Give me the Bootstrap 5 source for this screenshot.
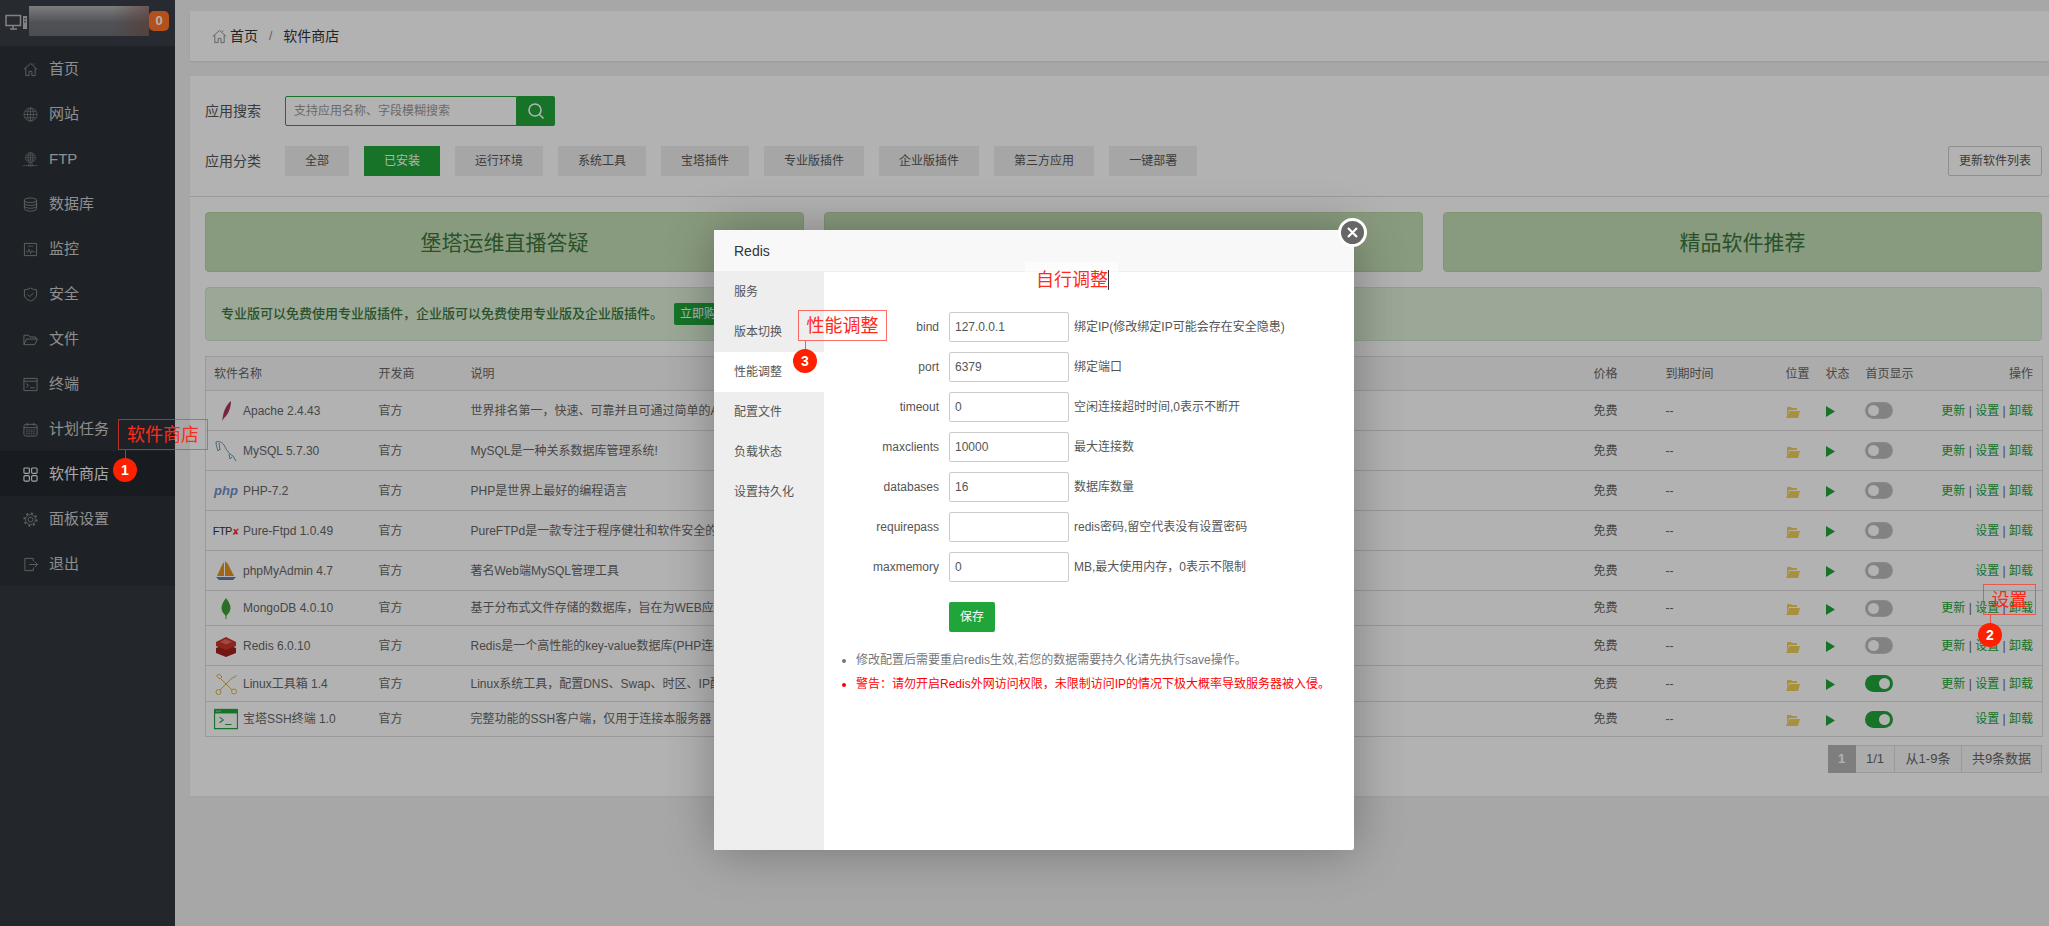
<!DOCTYPE html>
<html lang="zh-CN">
<head>
    <meta charset="UTF-8">
    <meta name="viewport" content="width=device-width, initial-scale=1.0">
    <title>软件商店</title>
    <link rel="stylesheet" href="https://cdn.jsdelivr.net/npm/bootstrap@5.3.0/dist/css/bootstrap.min.css">
    <style>
        html, body { height: 926px; overflow: hidden; }
        body {
            position: relative;
            font-family: "Liberation Sans", "Noto Sans CJK SC", sans-serif;
            font-size: 12px;
            color: #666;
            background: #f0f0f0;
        }
        a { text-decoration: none; }

        /* sidebar */
        #sideBar { width: 175px; height: 926px; background: #33373e; flex-shrink: 0; }
        .side-head { height: 46px; background: #383d46; padding: 6px 0 0 5px; }
        .side-logo {
            width: 120px; height: 30px; margin-left: 2px;
            background: linear-gradient(90deg, transparent 70%, rgba(130, 80, 70, .55)), linear-gradient(180deg, #b4b4b4, #72757a 55%, #6c6f74);
        }
        .side-count {
            width: 20px; height: 20px; margin-top: 5px; border-radius: 5px;
            background: #ff7529; color: #fff; font-weight: 700; font-size: 13px; line-height: 20px; text-align: center;
        }
        .side-list { background: #2c3138; }
        .side-link {
            height: 45px; padding: 2px 0 0 23px; gap: 11px;
            font-size: 15px; color: #ccc;
        }
        .side-link svg { width: 15px; height: 15px; color: #8c8c8c; flex-shrink: 0; }
        .side-link.is-on { background: #23272d; color: #f2f2f2; }
        .side-link.is-on svg { color: #eee; }

        /* main */
        #mainBox { flex: 1; padding: 11px 0 0 15px; min-width: 0; }
        .crumb-panel { height: 50px; background: #fff; padding: 0 0 0 22px; font-size: 14px; color: #333; box-shadow: 0 1px 2px rgba(0, 0, 0, .08); }
        .crumb-panel svg { width: 15px; height: 15px; color: #888; margin-right: 3px; }
        .crumb-text { padding-top: 0; line-height: 50px; }
        .crumb-sep { color: #888; margin: 0 11px; font-size: 12px; }
        .store-panel { height: 720px; margin-top: 15px; background: #fff; box-shadow: 0 1px 2px rgba(0, 0, 0, .05); }
        .store-top { padding: 20px 7px 20px 15px; border-bottom: 1px solid #ddd; }
        .field-name { width: 80px; font-size: 14px; color: #555; flex-shrink: 0; padding-top: 1px; }
        .search-input {
            width: 232px; height: 30px; border: 1px solid #20a53a; border-radius: 2px 0 0 2px;
            padding: 0 8px; font-size: 12px; color: #666; outline: 0;
        }
        .search-input::placeholder { color: #999; }
        .search-go { width: 38px; height: 30px; background: #20a53a; border-radius: 0 2px 2px 0; }
        .search-go svg { width: 18px; height: 18px; color: #fff; }
        .type-row { gap: 15px; }
        .type-btn { height: 30px; padding: 0 20px; line-height: 31px; background: #eee; color: #555; font-size: 12px; }
        .type-btn.is-on { background: #20a53a; color: #fff; }
        .refresh-btn { height: 30px; padding: 0 10px; border: 1px solid #ccc; border-radius: 2px; background: #fff; color: #555; font-size: 12px; line-height: 28px; }

        .store-body { padding: 15px 7px 0 15px; }
        .banner-row { gap: 20px; }
        .big-banner {
            flex: 1; height: 60px; line-height: 59px; text-align: center;
            background: #c5dfb5; border: 1px solid #b8d6a4; border-radius: 4px;
            color: #3c763d; font-size: 21px;
        }
        .pro-tip {
            height: 54px; margin-top: 15px; padding-left: 15px;
            background: #dff0d8; border: 1px solid #d0e6c6; border-radius: 4px;
            color: #3c763d; font-size: 13px; font-weight: 500; overflow: hidden;
        }
        .pro-buy { height: 22px; line-height: 22px; padding: 0 6px; margin-left: 11px; background: #20a53a; color: #fff; border-radius: 2px; font-size: 12px; font-weight: 400; }

        .soft-table { table-layout: fixed; width: 1837px; margin: 15px 0 0; border: 1px solid #ddd; --bs-table-bg: transparent; }
        .soft-table th, .soft-table td {
            padding: 0 9px; vertical-align: middle; font-size: 12px; font-weight: 400;
            color: #666; border: 0; border-bottom: 1px solid #ddd; white-space: nowrap; overflow: hidden;
            height: 40px;
        }
        .soft-table th { height: 34px; background: #f6f6f6; }
        .soft-table .h35 td { height: 35px; }
        .soft-table .h36 td { height: 36px; }
        .soft-table .h36b td { height: 35px; }
        .soft-table th:first-child, .soft-table td:first-child { padding-left: 8px; }
        .c-name { width: 164px; } .c-dev { width: 92px; } .c-desc { width: 1123px; }
        .c-price { width: 72px; } .c-end { width: 120px; } .c-pos { width: 40px; }
        .c-run { width: 40px; } .c-home { width: 68px; } .c-act { width: 118px; }
        .soft-name { gap: 5px; }
        .soft-pic { width: 24px; height: 24px; flex-shrink: 0; display: flex; align-items: center; justify-content: center; }
        .soft-pic svg { width: 24px; height: 24px; }
        .php-mark { font: italic 700 13px "Liberation Sans", sans-serif; color: #6f8fc8; }
        .ftp-mark { font: 400 11px "Liberation Sans", sans-serif; color: #333; letter-spacing: -.6px; white-space: nowrap; }
        .ftp-mark i { color: #e33; font-style: normal; font-size: 9px; }
        .act-link { color: #20a53a; }
        .folder-ico { width: 14px; height: 12px; color: #f0ce5a; display: block; margin-top: 2px; }
        .play-ico { width: 9px; height: 11px; color: #20a53a; display: block; margin-top: 2px; }
        .home-sw { display: block; width: 26px; height: 15px; border-radius: 8px; background: #bbb; box-shadow: 0 0 0 1px #c6c6c6; position: relative; }
        .home-sw::after { content: ""; position: absolute; left: 2px; top: 2px; width: 11px; height: 11px; border-radius: 50%; background: #fff; }
        .home-sw.is-on { background: #20a53a; box-shadow: 0 0 0 1px #20a53a; }
        .home-sw.is-on::after { left: 13px; }
        .page-box { margin-top: 8px; justify-content: flex-end; font-size: 13px; color: #666; }
        .page-cell { height: 28px; line-height: 26px; border: 1px solid #ddd; border-left: 0; background: #f6f6f6; text-align: center; }
        .page-cell.is-on { background: #b5b5b5; color: #fff; border-color: #b5b5b5; font-weight: 700; }
        .cell-w28 { width: 28px; } .cell-w39 { width: 39px; } .cell-w67 { width: 67px; } .cell-w80 { width: 80px; }

        /* popup layer */
        #shade { position: absolute; inset: 0; background: rgba(0, 0, 0, .3); }
        #redisBox {
            position: absolute; left: 714px; top: 230px; width: 640px; height: 620px;
            background: #fff; box-shadow: 1px 1px 50px rgba(0, 0, 0, .3); border-radius: 2px;
            color: #555;
        }
        .box-title { height: 42px; padding-left: 20px; line-height: 43px; background: #f8f8f8; border-bottom: 1px solid #eee; font-size: 14px; color: #333; }
        .box-menu { width: 110px; height: 578px; background: #eee; flex-shrink: 0; }
        .box-menu div { height: 40px; line-height: 41px; padding-left: 20px; font-size: 12px; color: #555; }
        .box-menu div.is-on { background: #fff; }
        .box-main { padding: 40px 0 0 15px; flex: 1; }
        .conf-line { height: 30px; margin-bottom: 10px; }
        .conf-line label { width: 100px; text-align: right; margin-right: 10px; font-size: 12px; color: #555; flex-shrink: 0; }
        .conf-line input { width: 120px; height: 30px; border: 1px solid #ccc; border-radius: 2px; padding: 0 5px; font-size: 12px; color: #555; margin-right: 5px; }
        .conf-save { margin: 10px 0 0 110px; width: 46px; height: 30px; line-height: 30px; padding: 0; background: #20a53a; border: 0; border-radius: 2px; color: #fff; font-size: 12px; }
        .conf-tips { margin: 17px 0 0; padding-left: 17px; font-size: 12px; color: #777; }
        .conf-tips li { height: 24px; line-height: 22px; }
        .conf-tips li.is-red { color: #f00; }
        #boxClose {
            position: absolute; left: 1338px; top: 218px; width: 29px; height: 29px;
            background: #666; border: 3px solid #fff; border-radius: 50%;
        }
        #boxClose svg { display: block; width: 23px; height: 23px; color: #fff; }

        /* red notes drawn on the screenshot */
        .note-box { position: absolute; border: 1px solid rgba(255, 50, 40, .7); color: #ff2a1a; font-size: 18px; text-align: center; line-height: 31px; height: 31px; }
        .note-dot { position: absolute; width: 24px; height: 24px; border-radius: 50%; background: #ff2000; color: #fff; font-size: 14px; font-weight: 700; line-height: 24px; text-align: center; }
        .note-line { position: absolute; width: 1px; height: 10px; background: rgba(255, 50, 40, .8); }
        .note-store { left: 118px; top: 419px; width: 90px; }
        .line-store { left: 125px; top: 450px; }
        .dot-store { left: 113px; top: 458px; }
        .note-setup { left: 1983px; top: 584px; width: 53px; }
        .line-setup { left: 1990px; top: 615px; }
        .dot-setup { left: 1978px; top: 623px; }
        .note-tune { left: 798px; top: 310px; width: 89px; }
        .line-tune { left: 805px; top: 341px; }
        .dot-tune { left: 793px; top: 349px; }
        .note-free { position: absolute; left: 1025px; top: 262px; width: 93px; height: 36px; padding-left: 11px; background: rgba(255, 255, 255, .55); color: #ff2a1a; font-size: 18px; line-height: 36px; }
        .note-free span { border-right: 1px solid #333; }
    </style>
</head>
<body class="d-flex">
    <svg width="0" height="0" class="position-absolute">
        <symbol id="i-home" viewBox="0 0 16 16"><path fill="none" stroke="currentColor" d="M.8 8 8 1.5 15.2 8M3 6.5v8h3.5v-4.500h3v4.500H13v-8M11.500 3V1.500"/></symbol>
        <symbol id="i-globe" viewBox="0 0 16 16"><g fill="none" stroke="currentColor" stroke-width=".7"><circle cx="8" cy="8" r="7"/><ellipse cx="8" cy="8" rx="3.200" ry="7"/><path d="M8 1v14M1 8h14M2 4.500h12M2 11.500h12"/></g></symbol>
        <symbol id="i-ftp" viewBox="0 0 16 16"><g fill="none" stroke="currentColor" stroke-width=".6"><circle cx="8" cy="6" r="5.300"/><ellipse cx="8" cy="6" rx="2.500" ry="5.300"/><path d="M8 1v10M2.700 6h10.600M3.500 3.500h9M3.500 8.500h9M0 14.500h16M6 12.800h4v2.200H6z"/></g></symbol>
        <symbol id="i-db" viewBox="0 0 16 16"><g fill="none" stroke="currentColor"><ellipse cx="8" cy="3.500" rx="6.500" ry="2.500"/><path d="M1.500 3.500v9c0 1.400 2.900 2.500 6.500 2.500s6.500-1.100 6.500-2.500v-9M1.500 6.500C1.500 7.900 4.400 9 8 9s6.500-1.100 6.500-2.500M1.500 9.500C1.500 10.900 4.400 12 8 12s6.500-1.100 6.500-2.500"/></g></symbol>
        <symbol id="i-chart" viewBox="0 0 16 16"><g fill="none" stroke="currentColor"><path d="M1.500 1.500h13v13h-13z"/><path stroke-width=".8" d="M3 10.500h2.500l1-3 1.500 5 1.500-3.500.8 1.500H13M5 4.500h6"/></g></symbol>
        <symbol id="i-shield" viewBox="0 0 16 16"><g fill="none" stroke="currentColor"><path d="M8 1c2 1.300 4 1.800 6.500 2v5.500c0 3-3 5.300-6.500 6.500-3.500-1.200-6.500-3.500-6.500-6.500V3C4 2.800 6 2.300 8 1z"/><path d="m4.800 7.800 2.400 2.400 4-4"/></g></symbol>
        <symbol id="i-folder" viewBox="0 0 16 16"><path fill="none" stroke="currentColor" d="M1 13.500v-10h5l1.500 1.800h6V7.500M1 13.500h11.500l3-6H3.800z"/></symbol>
        <symbol id="i-term" viewBox="0 0 16 16"><g fill="none" stroke="currentColor"><path d="M1 1.500h14v13H1zM1 4.500h14"/><path d="m3.500 7 2.500 2-2.500 2M7.500 11.500h5"/></g></symbol>
        <symbol id="i-cal" viewBox="0 0 16 16"><g fill="none" stroke="currentColor"><rect x="1" y="2.500" width="14" height="12.500" rx="2"/><path d="M1 6h14M4.500 1v3M11.500 1v3"/><path stroke-dasharray="1.500 1" d="M3.500 8.500h9M3.500 10.500h9M3.500 12.500h9"/></g></symbol>
        <symbol id="i-apps" viewBox="0 0 16 16"><g fill="none" stroke="currentColor" stroke-width="1.200"><rect x="1" y="1" width="5.800" height="5.800" rx="1.200"/><rect x="9.200" y="1" width="5.800" height="5.800" rx="1.200"/><rect x="1" y="9.200" width="5.800" height="5.800" rx="1.200"/><rect x="9.200" y="9.200" width="5.800" height="5.800" rx="1.200"/></g></symbol>
        <symbol id="i-gear" viewBox="0 0 16 16"><g fill="none" stroke="currentColor"><circle cx="8" cy="8" r="2.500"/><circle cx="8" cy="8" r="5.300" stroke-width=".9"/><circle cx="8" cy="8" r="6.700" stroke-width="1.700" stroke-dasharray="2.200 3"/></g></symbol>
        <symbol id="i-out" viewBox="0 0 16 16"><path fill="none" stroke="currentColor" d="M11 4.500v-3H2v13h9v-3M6.500 8h9M12.500 5l3 3-3 3"/></symbol>
        <symbol id="i-search" viewBox="0 0 18 18"><g fill="none" stroke="currentColor" stroke-width="1.600"><circle cx="8" cy="8" r="6"/><path d="m12.500 12.500 4 4"/></g></symbol>
    </svg>

    <aside id="sideBar" class="d-flex flex-column">
        <div class="side-head d-flex">
            <svg width="22" height="18" viewBox="0 0 22 18" class="mt-2 flex-shrink-0"><path fill="none" stroke="#bbb" stroke-width="1.500" d="M1 1.500h14.500v10H1zM5 15h7M8 12v3"/><path fill="#bbb" d="M18 2h4v13h-4z"/><path fill="#555" d="M19.200 4h1.600v1.500h-1.600zM19.200 7h1.600v1.500h-1.600z"/></svg>
            <div class="side-logo"></div>
            <div class="side-count">0</div>
        </div>
        <div class="side-list">
            <a class="side-link d-flex align-items-center"><svg><use href="#i-home"/></svg>首页</a>
            <a class="side-link d-flex align-items-center"><svg><use href="#i-globe"/></svg>网站</a>
            <a class="side-link d-flex align-items-center"><svg><use href="#i-ftp"/></svg>FTP</a>
            <a class="side-link d-flex align-items-center"><svg><use href="#i-db"/></svg>数据库</a>
            <a class="side-link d-flex align-items-center"><svg><use href="#i-chart"/></svg>监控</a>
            <a class="side-link d-flex align-items-center"><svg><use href="#i-shield"/></svg>安全</a>
            <a class="side-link d-flex align-items-center"><svg><use href="#i-folder"/></svg>文件</a>
            <a class="side-link d-flex align-items-center"><svg><use href="#i-term"/></svg>终端</a>
            <a class="side-link d-flex align-items-center"><svg><use href="#i-cal"/></svg>计划任务</a>
            <a class="side-link is-on d-flex align-items-center"><svg><use href="#i-apps"/></svg>软件商店</a>
            <a class="side-link d-flex align-items-center"><svg><use href="#i-gear"/></svg>面板设置</a>
            <a class="side-link d-flex align-items-center"><svg><use href="#i-out"/></svg>退出</a>
        </div>
    </aside>

    <main id="mainBox">
        <div class="crumb-panel d-flex align-items-center">
            <svg><use href="#i-home"/></svg><span class="crumb-text">首页</span><span class="crumb-sep">/</span><span class="crumb-text">软件商店</span>
        </div>
        <div class="store-panel">
            <div class="store-top">
                <div class="d-flex align-items-center">
                    <div class="field-name">应用搜索</div>
                    <input class="search-input" placeholder="支持应用名称、字段模糊搜索">
                    <div class="search-go d-flex align-items-center justify-content-center"><svg><use href="#i-search"/></svg></div>
                </div>
                <div class="d-flex align-items-center mt-3 pt-1">
                    <div class="field-name">应用分类</div>
                    <div class="d-flex type-row">
                        <span class="type-btn">全部</span>
                        <span class="type-btn is-on">已安装</span>
                        <span class="type-btn">运行环境</span>
                        <span class="type-btn">系统工具</span>
                        <span class="type-btn">宝塔插件</span>
                        <span class="type-btn">专业版插件</span>
                        <span class="type-btn">企业版插件</span>
                        <span class="type-btn">第三方应用</span>
                        <span class="type-btn">一键部署</span>
                    </div>
                    <button class="refresh-btn ms-auto">更新软件列表</button>
                </div>
            </div>
            <div class="store-body">
                <div class="d-flex banner-row">
                    <div class="big-banner">堡塔运维直播答疑</div>
                    <div class="big-banner"></div>
                    <div class="big-banner">精品软件推荐</div>
                </div>
                <div class="pro-tip d-flex align-items-center">
                    专业版可以免费使用专业版插件，企业版可以免费使用专业版及企业版插件。<span class="pro-buy">立即购买</span>
                </div>
                <table class="table soft-table">
                    <thead>
                        <tr>
                            <th class="c-name">软件名称</th><th class="c-dev">开发商</th><th class="c-desc">说明</th>
                            <th class="c-price">价格</th><th class="c-end">到期时间</th><th class="c-pos">位置</th>
                            <th class="c-run">状态</th><th class="c-home">首页显示</th><th class="c-act text-end">操作</th>
                        </tr>
                    </thead>
                    <tbody id="softRows"></tbody>
                </table>
                <div class="page-box d-flex">
                    <div class="page-cell is-on cell-w28">1</div>
                    <div class="page-cell cell-w39">1/1</div>
                    <div class="page-cell cell-w67">从1-9条</div>
                    <div class="page-cell cell-w80">共9条数据</div>
                </div>
            </div>
        </div>
    </main>

    <div id="shade"></div>

    <div id="redisBox">
        <div class="box-title">Redis</div>
        <div class="d-flex">
            <div class="box-menu">
                <div>服务</div>
                <div>版本切换</div>
                <div class="is-on">性能调整</div>
                <div>配置文件</div>
                <div>负载状态</div>
                <div>设置持久化</div>
            </div>
            <div class="box-main">
                <div class="conf-line d-flex align-items-center"><label>bind</label><input value="127.0.0.1">绑定IP(修改绑定IP可能会存在安全隐患)</div>
                <div class="conf-line d-flex align-items-center"><label>port</label><input value="6379">绑定端口</div>
                <div class="conf-line d-flex align-items-center"><label>timeout</label><input value="0">空闲连接超时时间,0表示不断开</div>
                <div class="conf-line d-flex align-items-center"><label>maxclients</label><input value="10000">最大连接数</div>
                <div class="conf-line d-flex align-items-center"><label>databases</label><input value="16">数据库数量</div>
                <div class="conf-line d-flex align-items-center"><label>requirepass</label><input value="">redis密码,留空代表没有设置密码</div>
                <div class="conf-line d-flex align-items-center"><label>maxmemory</label><input value="0">MB,最大使用内存，0表示不限制</div>
                <button class="btn conf-save">保存</button>
                <ul class="conf-tips">
                    <li>修改配置后需要重启redis生效,若您的数据需要持久化请先执行save操作。</li>
                    <li class="is-red">警告：请勿开启Redis外网访问权限，未限制访问IP的情况下极大概率导致服务器被入侵。</li>
                </ul>
            </div>
        </div>
    </div>
    <div id="boxClose"><svg viewBox="0 0 23 23"><path stroke="currentColor" stroke-width="2.200" d="m7 7 9 9M16 7l-9 9"/></svg></div>

    <div class="note-box note-store">软件商店</div>
    <div class="note-line line-store"></div>
    <div class="note-dot dot-store">1</div>

    <div class="note-box note-setup">设置</div>
    <div class="note-line line-setup"></div>
    <div class="note-dot dot-setup">2</div>

    <div class="note-box note-tune">性能调整</div>
    <div class="note-line line-tune"></div>
    <div class="note-dot dot-tune">3</div>

    <div class="note-free"><span>自行调整</span></div>

    <script src="https://cdn.jsdelivr.net/npm/bootstrap@5.3.0/dist/js/bootstrap.bundle.min.js"></script>
    <script>
        const icons = {
            apache: '<svg viewBox="0 0 24 24"><path fill="#a8365f" d="M17 2c-4 3-7 9-8 15l-1 5 2-3c4-3 7-10 7-17z"/></svg>',
            mysql: '<svg viewBox="0 0 24 24"><path fill="none" stroke="#4f86a8" stroke-width=".9" d="M2 3c3-1 6 0 8 3 2 4 4 8 9 11l3 5M2 3c0 3 1 6 2 9l2-2M5 4l1 7M15 15l1 5 2-2"/></svg>',
            php: '<span class="php-mark">php</span>',
            ftp: '<span class="ftp-mark">FTP<i>&#10008;</i></span>',
            pma: '<svg viewBox="0 0 24 24"><path fill="#e2921f" d="M3 17 8 6l2-3v14zM11 2l3 3 6 12h-9z"/><path fill="#6079b8" d="M2 18h20l-3 3H5z"/></svg>',
            mongo: '<svg viewBox="0 0 24 24"><path fill="#3fa037" d="M12 2C9 6 7.500 9 7.500 12s2 6 4.500 8c2.500-2 4.500-5 4.500-8S15 6 12 2z"/><path stroke="#3fa037" d="M12 19v4"/></svg>',
            redis: '<svg viewBox="0 0 24 24"><path fill="#a4221c" d="M2 14l10-4 10 4v5l-10 4-10-4z"/><path fill="#c8352c" d="M2 8l10-5 10 5v4l-10 4-10-4z"/><path fill="#e46a60" d="M12 5l6 3-6 2.500L6 8z"/></svg>',
            tools: '<svg viewBox="0 0 24 24"><g fill="none" stroke="#e3b23c" stroke-width="1"><path d="M6 18 18 6M6 6l12 12"/><circle cx="4.500" cy="20" r="2.500"/><circle cx="20" cy="19.500" r="2.500"/><path d="M2.500 4 5 2l3 3-2 2zM18 6l3-1 1-2"/></g></svg>',
            ssh: '<svg viewBox="0 0 26 22"><path fill="#20a53a" d="M0 0h26v5H0z"/><path fill="none" stroke="#20a53a" stroke-width="1.200" d="M.6 4v17.400h24.800V4M6 9l4 3-4 3M12 17h7"/><path stroke="#fff" stroke-dasharray="1 1" d="M2 2.500h5"/></svg>'
        };

        const softList = [
            ['Apache 2.4.43', 'apache', '世界排名第一，快速、可靠并且可通过简单的API扩充，将Perl/Python等解释器编译到服务器中!', 1, 0, ''],
            ['MySQL 5.7.30', 'mysql', 'MySQL是一种关系数据库管理系统!', 1, 0, ''],
            ['PHP-7.2', 'php', 'PHP是世界上最好的编程语言', 1, 0, ''],
            ['Pure-Ftpd 1.0.49', 'ftp', 'PureFTPd是一款专注于程序健壮和软件安全的免费FTP服务器软件', 0, 0, ''],
            ['phpMyAdmin 4.7', 'pma', '著名Web端MySQL管理工具', 0, 0, ''],
            ['MongoDB 4.0.10', 'mongo', '基于分布式文件存储的数据库，旨在为WEB应用提供可扩展的高性能数据存储解决方案', 1, 0, 'h35'],
            ['Redis 6.0.10', 'redis', 'Redis是一个高性能的key-value数据库(PHP连接Redis，需PHP安装Redis扩展)', 1, 0, ''],
            ['Linux工具箱 1.4', 'tools', 'Linux系统工具，配置DNS、Swap、时区、IP配置等', 1, 1, 'h36'],
            ['宝塔SSH终端 1.0', 'ssh', '完整功能的SSH客户端，仅用于连接本服务器', 0, 1, 'h36b']
        ];

        document.getElementById('softRows').innerHTML = softList.map(([name, pic, desc, canUpdate, onHome, rowClass]) => `
            <tr class="${rowClass}">
                <td><div class="soft-name d-flex align-items-center"><span class="soft-pic">${icons[pic]}</span>${name}</div></td>
                <td>官方</td>
                <td>${desc}</td>
                <td>免费</td>
                <td>--</td>
                <td><svg class="folder-ico" viewBox="0 0 14 12"><path fill="currentColor" d="M1 3V1h4l1 1h5v2H3L1 10zM3.500 5H14l-2 7H0z"/></svg></td>
                <td><svg class="play-ico" viewBox="0 0 9 11"><path fill="currentColor" d="M0 0l9 5.500L0 11z"/></svg></td>
                <td><span class="home-sw ${onHome ? 'is-on' : ''}"></span></td>
                <td class="text-end">${canUpdate ? '<a class="act-link">更新</a> | ' : ''}<a class="act-link">设置</a> | <a class="act-link">卸载</a></td>
            </tr>`).join('');
    </script>
</body>
</html>
